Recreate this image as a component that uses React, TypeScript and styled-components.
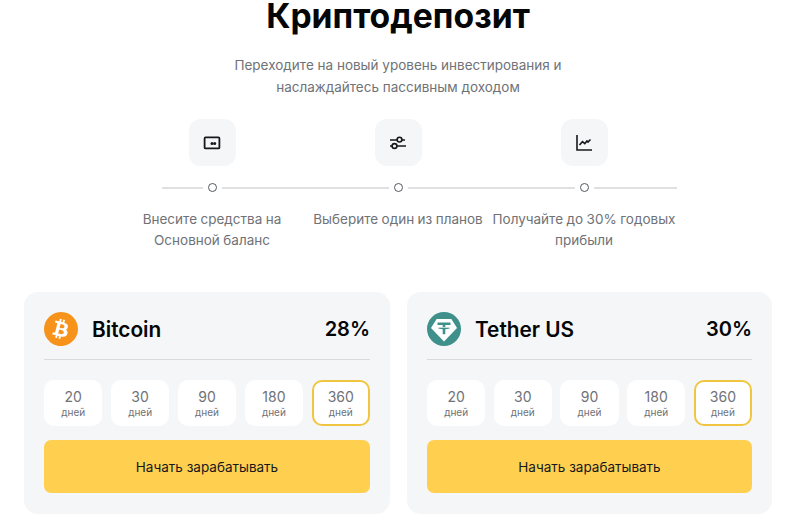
import React from "react";
import styled, { createGlobalStyle } from "styled-components";
import { FaBtc } from "react-icons/fa";

const terms = [
  { value: 20 },
  { value: 30 },
  { value: 90 },
  { value: 180 },
  { value: 360, active: true },
];

const steps = [
  { id: "deposit", label: "Внесите средства на Основной баланс" },
  { id: "plan", label: "Выберите один из планов" },
  { id: "profit", label: "Получайте до 30% годовых прибыли" },
];

const plans = [
  { id: "btc", name: "Bitcoin", rate: "28%" },
  { id: "usdt", name: "Tether US", rate: "30%" },
];

function DepositIcon() {
  return (
    <svg width="18" height="18" viewBox="0 0 18 18" fill="none">
      <rect x="1.6" y="3.4" width="14.8" height="11" rx="1" stroke="#16181d" strokeWidth="1.8" />
      <circle cx="9" cy="9.6" r="1.5" fill="#16181d" />
      <circle cx="11.7" cy="9.6" r="1.5" fill="#16181d" />
    </svg>
  );
}

function PlanIcon() {
  return (
    <svg width="18" height="18" viewBox="0 0 18 18" fill="none" stroke="#16181d" strokeWidth="1.6">
      <path d="M1 6h7M13 6h3M1 12h2M8 12h9" />
      <circle cx="10.5" cy="5.6" r="2.4" />
      <circle cx="5.5" cy="12" r="2.4" />
    </svg>
  );
}

function ChartIcon() {
  return (
    <svg width="18" height="18" viewBox="0 0 18 18" fill="none" stroke="#16181d" strokeWidth="1.6">
      <path d="M2 1V16h15" />
      <path d="M4.5 11l3-3.4 2.3 2L12 7l1 1 2.5-2.5" />
    </svg>
  );
}

function StepIcon({ id }: { id: string }) {
  if (id === "deposit") return <DepositIcon />;
  if (id === "plan") return <PlanIcon />;
  return <ChartIcon />;
}

function TetherLogo() {
  return (
    <svg width="34" height="34" viewBox="0 0 34 34">
      <circle cx="17" cy="17" r="17" fill="#3f908b" />
      <path d="M9.6 7h14.8L30 16 17 29.5 4 16z" fill="#fff" />
      <path d="M10.5 10.5h13v2.4h-5.2v2c2.6.1 4.8.6 4.8 1.2s-2.2 1.1-4.8 1.2v5h-2.6v-5c-2.6-.1-4.8-.6-4.8-1.2s2.2-1.1 4.8-1.2v-2h-5.2z" fill="#3f908b" />
      <path d="M11.2 16.1c1.2-.5 3.3-.7 5.8-.7s4.6.2 5.8.7" fill="none" stroke="#fff" strokeWidth=".7" />
    </svg>
  );
}

export default function App() {
  return (
    <>
      <GlobalStyle />
      <Page>
        <Title>Криптодепозит</Title>
        <Subtitle>
          Переходите на новый уровень инвестирования и наслаждайтесь пассивным доходом
        </Subtitle>
        <Steps>
          {steps.map((step, i) => (
            <Step key={step.id}>
              <IconTile>
                <StepIcon id={step.id} />
              </IconTile>
              <Rail>
                <RailLine $short={i === 0} />
                <RailDot />
                <RailLine />
              </Rail>
              <StepLabel>{step.label}</StepLabel>
            </Step>
          ))}
        </Steps>
        <Cards>
          {plans.map((plan) => (
            <Card key={plan.id}>
              <CardHeader>
                {plan.id === "btc" ? (
                  <BitcoinMark>
                    <FaBtc size={20} color="#fff" />
                  </BitcoinMark>
                ) : (
                  <TetherLogo />
                )}
                <CoinName>{plan.name}</CoinName>
                <Rate>{plan.rate}</Rate>
              </CardHeader>
              <Terms>
                {terms.map((term) => (
                  <Term key={term.value} $active={term.active}>
                    <TermValue>{term.value}</TermValue>
                    <TermUnit>дней</TermUnit>
                  </Term>
                ))}
              </Terms>
              <StartButton>Начать зарабатывать</StartButton>
            </Card>
          ))}
        </Cards>
      </Page>
    </>
  );
}

const GlobalStyle = createGlobalStyle`
  html, body {
    margin: 0;
    background: #fff;
    overflow: hidden;
  }
  body {
    font-family: Inter, "Liberation Sans", sans-serif;
  }
`;

const Page = styled.div`
  width: 796px;
  height: 522px;
  box-sizing: border-box;
  padding: 0 24px;
  display: flex;
  flex-direction: column;
  align-items: center;
  overflow: hidden;
`;

const Title = styled.h1`
  margin: 1px 0 0;
  font-size: 33.7px;
  line-height: 30px;
  font-weight: 700;
  color: #050608;
`;

const Subtitle = styled.p`
  margin: 23px 0 0;
  width: 380px;
  font-size: 13.5px;
  line-height: 22px;
  text-align: center;
  color: #6f7277;
`;

const Steps = styled.div`
  margin-top: 21px;
  display: grid;
  grid-template-columns: repeat(3, 186px);
`;

const Step = styled.div`
  display: flex;
  flex-direction: column;
  align-items: center;
`;

const IconTile = styled.div`
  width: 47px;
  height: 47px;
  border-radius: 12px;
  background: #f5f6f8;
  display: flex;
  align-items: center;
  justify-content: center;
`;

const Rail = styled.div`
  align-self: stretch;
  margin-top: 17px;
  display: flex;
  align-items: center;
  gap: 5px;
`;

const RailLine = styled.div<{ $short?: boolean }>`
  flex: ${(p) => (p.$short ? "none" : "1")};
  width: ${(p) => (p.$short ? "41px" : "auto")};
  margin-left: ${(p) => (p.$short ? "43px" : "0")};
  height: 2px;
  background: #dfe0e2;
`;

const RailDot = styled.div`
  width: 9px;
  height: 9px;
  box-sizing: border-box;
  border: 1.5px solid #55585d;
  border-radius: 50%;
`;

const StepLabel = styled.div`
  margin-top: 17px;
  width: 186px;
  font-size: 13.5px;
  line-height: 21px;
  text-align: center;
  color: #6f7277;
  word-spacing: -0.3px;
`;

const Cards = styled.div`
  align-self: stretch;
  margin-top: 41px;
  display: grid;
  grid-template-columns: 366px 365px;
  gap: 17px;
`;

const Card = styled.section`
  height: 222px;
  box-sizing: border-box;
  padding: 20px;
  border-radius: 14px;
  background: #f5f6f8;
`;

const CardHeader = styled.div`
  display: flex;
  align-items: center;
  gap: 14px;
  padding-bottom: 13px;
  border-bottom: 1px solid #d9dadc;
`;

const BitcoinMark = styled.div`
  width: 34px;
  height: 34px;
  border-radius: 50%;
  background: #f7931a;
  display: flex;
  align-items: center;
  justify-content: center;
  transform: rotate(14deg);
`;

const CoinName = styled.div`
  flex: 1;
  font-size: 20.8px;
  font-weight: 600;
  color: #050608;
`;

const Rate = styled.div`
  font-size: 20px;
  font-weight: 600;
  color: #050608;
`;

const Terms = styled.div`
  margin-top: 20px;
  display: grid;
  grid-template-columns: repeat(5, 1fr);
  gap: 8.5px;
`;

const Term = styled.div<{ $active?: boolean }>`
  height: 46px;
  box-sizing: border-box;
  border-radius: 10px;
  background: #fff;
  border: 2px solid ${(p) => (p.$active ? "#f0c640" : "#fff")};
  display: flex;
  flex-direction: column;
  align-items: center;
  justify-content: center;
  color: #6f7277;
`;

const TermValue = styled.div`
  font-size: 14px;
  line-height: 17px;
`;

const TermUnit = styled.div`
  font-size: 10px;
  line-height: 14px;
`;

const StartButton = styled.button`
  display: block;
  width: 100%;
  height: 53px;
  margin-top: 14px;
  border: none;
  border-radius: 7px;
  background: #ffd050;
  font-family: inherit;
  font-size: 13.5px;
  font-weight: 400;
  color: #16181d;
`;
